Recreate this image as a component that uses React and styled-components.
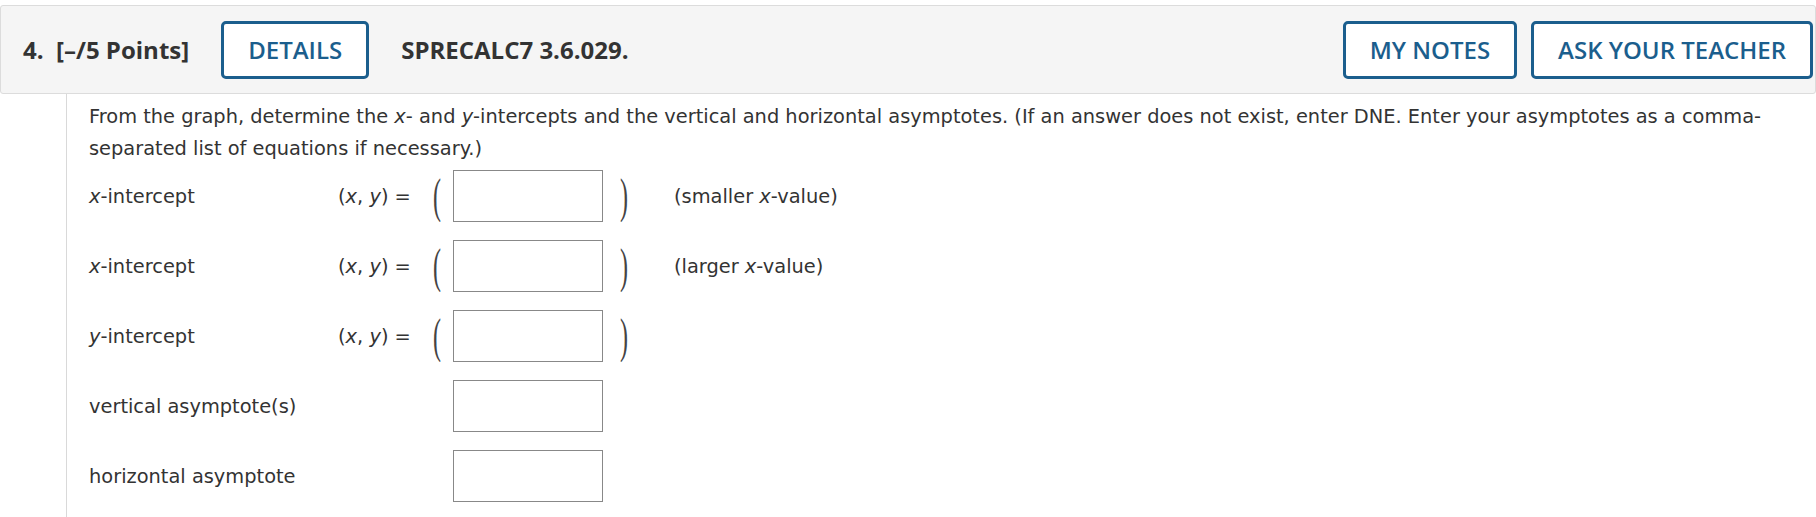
import React from "react";
import styled, { createGlobalStyle } from "styled-components";

const GlobalStyle = createGlobalStyle`
  body {
    margin: 0;
    background: #ffffff;
  }
`;

const Page = styled.div`
  width: 1816px;
  padding-top: 5px;
  box-sizing: border-box;
`;

const Header = styled.div`
  display: flex;
  align-items: center;
  height: 89px;
  box-sizing: border-box;
  padding: 0 2px 0 22px;
  background: #f5f5f5;
  border: 1px solid #dcdcdc;
  border-radius: 3px;
  font-family: "Open Sans", "Noto Sans", sans-serif;
  font-size: 24px;
  color: #333333;
`;

const HeaderText = styled.span`
  font-weight: 700;
  margin-right: 32px;
  white-space: pre;
`;

const Spacer = styled.div`
  flex: 1;
`;

const OutlineButton = styled.button`
  height: 58px;
  box-sizing: border-box;
  padding: 0 24px;
  margin-right: ${(p) => p.$gap || 0}px;
  background: #ffffff;
  border: 3px solid #1b5e8d;
  border-radius: 5px;
  color: #1b5e8d;
  font-family: "Open Sans", "Noto Sans", sans-serif;
  font-size: 24px;
  font-weight: 600;
  cursor: pointer;
`;

const Body = styled.div`
  margin-left: 66px;
  border-left: 1px solid #d9d9d9;
  padding: 7px 24px 15px 22px;
  font-family: "DejaVu Sans", Verdana, sans-serif;
  font-size: 19.4px;
  color: #333333;
`;

const Prompt = styled.p`
  margin: 0 0 5px;
  line-height: 32px;
`;

const Var = styled.i`
  font-style: italic;
`;

const Row = styled.div`
  display: grid;
  grid-template-columns: 249px 115px 150px auto;
  align-items: center;
  height: 52px;
  margin-bottom: 18px;

  &:last-child {
    margin-bottom: 0;
  }
`;

const EqCell = styled.div`
  display: flex;
  align-items: center;
  justify-content: space-between;
`;

const Paren = styled.span`
  display: inline-block;
  font-family: "Liberation Serif", serif;
  font-size: 24px;
  line-height: 24px;
  color: #444444;
  transform: scaleY(2);
  margin: ${(p) => (p.$right ? "0 0 0 17px" : "0 12px 0 0")};
`;

const AnswerBox = styled.input`
  width: 150px;
  height: 52px;
  box-sizing: border-box;
  border: 1px solid #888888;
  border-radius: 0;
  background: #ffffff;
  padding: 0 6px;
  font-family: "DejaVu Sans", Verdana, sans-serif;
  font-size: 19px;
  outline: none;
`;

const After = styled.div`
  display: flex;
  align-items: center;
`;

const Hint = styled.span`
  margin-left: 46px;
`;

const rows = [
  { label: <><Var>x</Var>-intercept</>, eq: true, hint: <>(smaller <Var>x</Var>-value)</> },
  { label: <><Var>x</Var>-intercept</>, eq: true, hint: <>(larger <Var>x</Var>-value)</> },
  { label: <><Var>y</Var>-intercept</>, eq: true },
  { label: "vertical asymptote(s)" },
  { label: "horizontal asymptote" },
];

export default function App() {
  return (
    <Page>
      <GlobalStyle />
      <Header>
        <HeaderText>{"4.  [–/5 Points]"}</HeaderText>
        <OutlineButton $gap={32}>DETAILS</OutlineButton>
        <HeaderText>SPRECALC7 3.6.029.</HeaderText>
        <Spacer />
        <OutlineButton $gap={14}>MY NOTES</OutlineButton>
        <OutlineButton>ASK YOUR TEACHER</OutlineButton>
      </Header>
      <Body>
        <Prompt>
          From the graph, determine the <Var>x</Var>- and <Var>y</Var>-intercepts and the
          vertical and horizontal asymptotes. (If an answer does not exist, enter DNE. Enter
          your asymptotes as a comma-separated list of equations if necessary.)
        </Prompt>
        {rows.map((r, i) => (
          <Row key={i}>
            <span>{r.label}</span>
            <EqCell>
              {r.eq && (
                <>
                  <span>
                    (<Var>x</Var>, <Var>y</Var>) =
                  </span>
                  <Paren>(</Paren>
                </>
              )}
            </EqCell>
            <AnswerBox type="text" />
            <After>
              {r.eq && <Paren $right>)</Paren>}
              {r.hint && <Hint>{r.hint}</Hint>}
            </After>
          </Row>
        ))}
      </Body>
    </Page>
  );
}
